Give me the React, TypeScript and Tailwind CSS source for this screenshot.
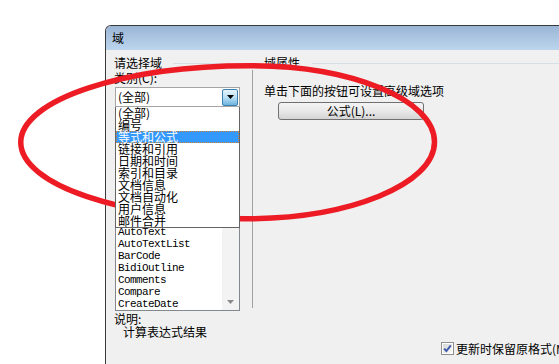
import React from "react";

const categories = ["(全部)", "编号", "等式和公式", "链接和引用", "日期和时间", "索引和目录", "文档信息", "文档自动化", "用户信息", "邮件合并"];

// rows scrolled under the open drop-down are not drawn
const fields = ["AutoText", "AutoTextList", "BarCode", "BidiOutline", "Comments", "Compare", "CreateDate"];

const ComboBox = () => (
  <div className="relative mt-[2px] ml-px flex h-[20px] w-[125px] items-center border border-[#a5a5a5] bg-white">
    <span className="flex-1 pl-[2px] leading-[14px]">(全部)</span>
    <div className="mr-px flex h-[17px] w-[16px] items-center justify-center rounded-[2px] border border-[#3c7fb1] bg-linear-to-b from-[#e5f4fc] via-[#b9e0f5] to-[#6eb3de]">
      <svg width="7" height="4" viewBox="0 0 7 4">
        <path d="M0 0h7L3.5 4z" fill="#000" />
      </svg>
    </div>
    {/* open drop-down list */}
    <ul className="absolute left-[-1px] top-[19px] z-10 w-[125px] border-x border-b border-[#646464] bg-white">
      {categories.map((c, i) => (
        <li
          key={c}
          className={
            i === 2
              ? "h-[12px] border border-dotted border-[#c8823c] bg-[#3399ff] pl-px leading-[10px] text-white"
              : "h-[12px] pl-[2px] leading-[12px]"
          }
        >
          {c}
        </li>
      ))}
    </ul>
  </div>
);

const FieldList = () => (
  <div className="ml-px flex h-[188px] w-[125px] overflow-hidden border border-[#828790] bg-white">
    <ul className="flex-1 pl-[2px] pt-[102px] font-['Liberation_Mono',monospace] text-[11px] tracking-[-0.6px]">
      {fields.map((f) => (
        <li key={f} className="h-[12px] leading-[12px] whitespace-nowrap">
          {f}
        </li>
      ))}
    </ul>
    <div className="flex w-[17px] flex-col items-center justify-end bg-[#f3f3f3] pb-[6px]">
      <svg width="7" height="4" viewBox="0 0 7 4">
        <path d="M0 0h7L3.5 4z" fill="#8a8a8a" />
      </svg>
    </div>
  </div>
);

const CheckBox = () => (
  <svg width="13" height="13" viewBox="0 0 13 13">
    <defs>
      <linearGradient id="cb" x1="0" y1="0" x2="1" y2="1">
        <stop offset="0" stopColor="#d6d6d6" />
        <stop offset="1" stopColor="#fbfbfb" />
      </linearGradient>
    </defs>
    <rect x="0.5" y="0.5" width="12" height="12" fill="#fff" stroke="#8f8f8f" />
    <rect x="2" y="2" width="9" height="9" fill="url(#cb)" />
    <path d="M3.2 6.6 5.4 9 9.8 3.4" fill="none" stroke="#3c5aa8" strokeWidth="2" />
  </svg>
);

export default function App() {
  return (
    <div className="relative h-[364px] w-[559px] overflow-hidden bg-white pl-[105px] pt-[25px] font-['Noto_Sans_CJK_SC','Liberation_Sans',sans-serif] text-[12px] text-black">
      <div className="h-[400px] w-[520px] rounded-tl-[6px] border-l border-t border-[#3a3a3a] bg-[#f0f0f0]">
        {/* title bar */}
        <div className="h-[24px] rounded-tl-[5px] bg-linear-to-b from-[#9ab6d5] to-[#bdd5ee] pl-[6px] leading-[24px]">域</div>

        <div className="flex pt-[6px]">
          {/* left: field picker */}
          <div className="flex w-[146px] flex-col pl-[8px]">
            <div className="flex h-[14px] items-center">
              <span className="leading-[14px]">请选择域</span>
              <div className="ml-[11px] h-px w-[73px] bg-[#d5dfe5]" />
            </div>
            <div className="mt-px h-[14px] leading-[14px]">类别(C):</div>
            <ComboBox />
            <div className="h-[16px]" />
            <FieldList />
            <div className="mt-px leading-[13px]">说明:</div>
            <div className="pl-[9px] leading-[13px]">计算表达式结果</div>
          </div>

          {/* right: field properties */}
          <div className="flex flex-1 flex-col">
            <div className="flex h-[14px] items-center">
              <span className="pl-[12px] leading-[14px]">域属性</span>
              <div className="ml-[12px] h-px flex-1 bg-[#d5dfe5]" />
            </div>
            <div className="h-[238px] border-l border-[#a0a0a0] pl-[11px]">
              <div className="mt-[14px] leading-[14px]">单击下面的按钮可设置高级域选项</div>
              <button className="mt-[4px] ml-[14px] flex h-[18px] w-[146px] items-center justify-center rounded-[3px] border border-[#707070] bg-linear-to-b from-[#f4f4f4] via-[#e9e9e9] to-[#d4d4d4] leading-[14px]">
                公式(L)...
              </button>
            </div>
          </div>
        </div>

        <div className="mt-[4px] flex h-[13px] items-center gap-[2px] pl-[335px]">
          <CheckBox />
          <span className="whitespace-nowrap leading-[13px]">更新时保留原格式(M)</span>
        </div>
      </div>

      {/* red annotation ellipse */}
      <svg className="pointer-events-none absolute left-0 top-0" width="559" height="364" viewBox="0 0 559 364">
        <path
          d="M20.75 142.25C20.75 100 123.5 65.75 250 65.75C351.9 65.75 434.5 99.7 434.5 142C434.5 184.3 349.7 218.75 245 218.75C121.1 218.75 20.75 184.5 20.75 142.25Z"
          fill="none"
          stroke="#ed1c24"
          strokeWidth="5.5"
        />
      </svg>
    </div>
  );
}
